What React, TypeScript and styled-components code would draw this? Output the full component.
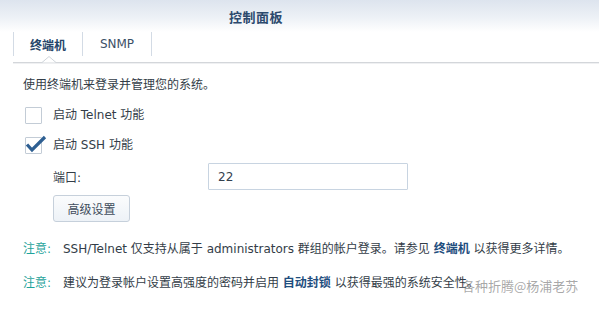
import styled, { createGlobalStyle } from 'styled-components';

const GlobalStyle = createGlobalStyle`
  html, body {
    margin: 0;
    padding: 0;
    background: #ffffff;
  }
  body {
    font-family: "DejaVu Sans", "Noto Sans CJK SC", sans-serif;
    font-size: 12px;
    color: #333d48;
  }
`;

function App() {
  return (
    <>
      <GlobalStyle />
      <Window>
        <Header>
          <Title>控制面板</Title>
        </Header>
        <TabBar>
          <Tab $active>
            终端机
            <Notch width="14" height="7" viewBox="0 0 14 7">
              <path d="M0 6.5 L7 0.5 L14 6.5" fill="#fff" stroke="#cfd4da" strokeWidth="1" />
            </Notch>
          </Tab>
          <Tab>SNMP</Tab>
        </TabBar>

        <Content>
          <Intro>使用终端机来登录并管理您的系统。</Intro>

          <CheckRow>
            <Box />
            <CheckLabel>启动 Telnet 功能</CheckLabel>
          </CheckRow>
          <CheckRow $gap={13}>
            <Box>
              <svg width="22" height="18" viewBox="0 0 22 18">
                <path d="M2 9.5 L7 15 L20 2" fill="none" stroke="#2e5f92" strokeWidth="3.2" strokeLinejoin="miter" />
              </svg>
            </Box>
            <CheckLabel>启动 SSH 功能</CheckLabel>
          </CheckRow>

          <FieldRow>
            <FieldLabel>端口:</FieldLabel>
            <TextInput value="22" readOnly />
          </FieldRow>

          <Button>高级设置</Button>

          <Note $gap={18}>
            <NoteTag>注意:</NoteTag>
            <span>
              SSH/Telnet 仅支持从属于 administrators 群组的帐户登录。请参见 <Link>终端机</Link> 以获得更多详情。
            </span>
          </Note>
          <Note $gap={16}>
            <NoteTag>注意:</NoteTag>
            <span>
              建议为登录帐户设置高强度的密码并启用 <Link>自动封锁</Link> 以获得最强的系统安全性。
            </span>
          </Note>
        </Content>

        <Watermark>各种折腾@杨浦老苏</Watermark>
      </Window>
    </>
  );
}

const Window = styled.div`
  position: relative;
  width: 599px;
  height: 312px;
  overflow: hidden;
  background: #fff;
`;

const Header = styled.header`
  height: 32px;
  padding-left: 229px;
  display: flex;
  align-items: center;
  background: linear-gradient(to bottom, #dde4ee 0%, #edf1f6 55%, #ffffff 100%);
`;

const Title = styled.h1`
  margin: 0;
  font-size: 13px;
  font-weight: bold;
  color: #2c4a6e;
  letter-spacing: 0.5px;
`;

const TabBar = styled.nav`
  margin-left: 13px;
  height: 30px;
  display: flex;
  align-items: flex-start;
  border-bottom: 1px solid #d3d6da;
  box-shadow: 0 1px 0 #eff0f2;
`;

const Tab = styled.div<{ $active?: boolean }>`
  position: relative;
  width: 68px;
  height: 24px;
  display: flex;
  align-items: center;
  justify-content: center;
  border-left: 1px solid #d3dbe5;
  font-size: 12px;
  font-weight: ${(p) => (p.$active ? 'bold' : 'normal')};
  color: ${(p) => (p.$active ? '#26466b' : '#3b4f66')};
  &:last-child {
    border-right: 1px solid #d3dbe5;
  }
`;

const Notch = styled.svg`
  position: absolute;
  left: 28px;
  top: 24px;
`;

const Content = styled.main`
  padding: 13px 0 0 23px;
`;

const Intro = styled.p`
  margin: 0;
  line-height: 18px;
`;

const CheckRow = styled.label<{ $gap?: number }>`
  display: flex;
  align-items: center;
  gap: 11px;
  margin-top: ${(p) => p.$gap ?? 13}px;
  padding-left: 2px;
  height: 17px;
`;

const Box = styled.span`
  position: relative;
  width: 15px;
  height: 15px;
  border: 1px solid #c3ccd6;
  border-radius: 1px;
  background: #fff;
  svg {
    position: absolute;
    left: -1px;
    top: -3px;
  }
`;

const CheckLabel = styled.span`
  line-height: 17px;
`;

const FieldRow = styled.div`
  display: flex;
  align-items: center;
  margin-top: 9px;
  padding-left: 30px;
`;

const FieldLabel = styled.span`
  width: 155px;
`;

const TextInput = styled.input`
  box-sizing: border-box;
  width: 200px;
  height: 27px;
  padding: 0 9px;
  border: 1px solid #c8d4e1;
  border-radius: 1px;
  font-family: "DejaVu Sans", "Noto Sans CJK SC", sans-serif;
  font-size: 12px;
  color: #33404e;
  outline: none;
`;

const Button = styled.button`
  display: block;
  box-sizing: border-box;
  margin: 5px 0 0 30px;
  width: 77px;
  height: 27px;
  border: 1px solid #c6d0db;
  border-radius: 3px;
  background: linear-gradient(to bottom, #fbfcfd, #edf2f7);
  font-family: "DejaVu Sans", "Noto Sans CJK SC", sans-serif;
  font-size: 12px;
  color: #3f4d5c;
`;

const Note = styled.p<{ $gap: number }>`
  margin: ${(p) => p.$gap}px 0 0;
  line-height: 18px;
  display: flex;
  white-space: nowrap;
`;

const NoteTag = styled.span`
  width: 40px;
  color: #1fa39b;
`;

const Link = styled.b`
  color: #1f4e7e;
`;

const Watermark = styled.div`
  position: absolute;
  left: 462px;
  top: 276px;
  font-size: 13px;
  color: rgba(110, 110, 110, 0.6);
  font-family: "Noto Sans CJK SC", sans-serif;
`;

export default App;
